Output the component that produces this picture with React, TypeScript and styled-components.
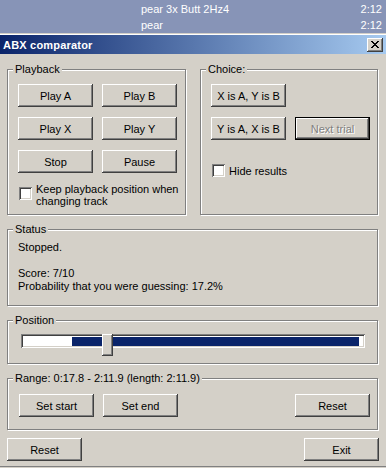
import React from 'react';
import styled, { createGlobalStyle, css } from 'styled-components';

const GlobalStyle = createGlobalStyle`
    html, body {
        margin: 0;
        padding: 0;
        background: #d4d0c8;
    }
    body {
        font-family: "Liberation Sans", Arial, sans-serif;
        font-size: 11px;
        color: #000;
    }
`;

const raised = css`
    box-shadow: inset -1px -1px #404040, inset 1px 1px #fff, inset -2px -2px #808080, inset 2px 2px #d4d0c8;
`;

const sunken = css`
    box-shadow: inset 1px 1px #808080, inset -1px -1px #fff, inset 2px 2px #404040, inset -2px -2px #d4d0c8;
`;

const Screen = styled.div`
    width: 386px;
    height: 468px;
    display: flex;
    flex-direction: column;
    overflow: hidden;
`;

const TrackList = styled.div`
    background: #8794b7;
    color: #fff;
`;

const TrackRow = styled.div<{ $h: number }>`
    height: ${(p) => p.$h}px;
    display: flex;
    align-items: center;
    justify-content: space-between;
    padding: 0 4px 0 141px;
`;

const FrameEdge = styled.div`
    height: 1px;
    border-top: 1px solid #d4d0c8;
    background: #fff;
`;

const TitleBar = styled.div`
    height: 19px;
    display: flex;
    align-items: center;
    justify-content: space-between;
    padding: 0 3px 0 3px;
    background: linear-gradient(to right, #0a246a, #a6caf0);
    color: #fff;
    font-weight: bold;
    letter-spacing: 0.2px;
`;

const CloseButton = styled.div`
    width: 16px;
    height: 14px;
    display: flex;
    align-items: center;
    justify-content: center;
    background: #d4d0c8;
    ${raised};
`;

const Body = styled.div`
    flex: 1;
    display: flex;
    flex-direction: column;
    gap: 14px;
    padding: 15px 8px 0 7px;
    border-bottom: 1px solid #808080;
    margin-bottom: 1px;
`;

const TopRow = styled.div`
    display: grid;
    grid-template-columns: 179px 178px;
    column-gap: 14px;
    height: 146px;
`;

const Group = styled.div<{ $h?: number; $pad: string }>`
    position: relative;
    box-sizing: border-box;
    ${(p) => p.$h && `height: ${p.$h}px;`}
    padding: ${(p) => p.$pad};
    border: 1px solid #808080;
    box-shadow: inset 1px 1px #fff, 1px 1px #fff;
`;

const Caption = styled.span`
    position: absolute;
    top: -7px;
    left: 5px;
    padding: 0 2px;
    line-height: 13px;
    background: #d4d0c8;
`;

const ButtonGrid = styled.div`
    display: grid;
    grid-template-columns: 75px 75px;
    gap: 10px 9px;
`;

const ButtonRow = styled.div<{ $mt?: number }>`
    display: flex;
    gap: 9px;
    margin-top: ${(p) => p.$mt || 0}px;
`;

const Button = styled.div<{ $default?: boolean; $disabled?: boolean }>`
    box-sizing: border-box;
    width: 75px;
    height: 23px;
    display: flex;
    align-items: center;
    justify-content: center;
    background: #d4d0c8;
    ${raised};
    ${(p) =>
        p.$default &&
        css`
            border: 1px solid #000;
        `}
    ${(p) =>
        p.$disabled &&
        css`
            color: #808080;
            text-shadow: 1px 1px #fff;
        `}
`;

const CheckRow = styled.div<{ $mt: number; $top?: boolean }>`
    display: flex;
    align-items: ${(p) => (p.$top ? 'flex-start' : 'center')};
    gap: 4px;
    margin-top: ${(p) => p.$mt}px;
    margin-left: 1px;
    line-height: 12px;
`;

const CheckBox = styled.div<{ $mt?: number }>`
    flex: none;
    width: 13px;
    height: 13px;
    margin-top: ${(p) => p.$mt || 0}px;
    background: #fff;
    ${sunken};
`;

const StatusText = styled.div`
    line-height: 13px;
    white-space: pre;
`;

const Slider = styled.div`
    position: relative;
    width: 344px;
    height: 22px;
    margin-left: 13px;
`;

const Track = styled.div`
    position: relative;
    margin-top: 4px;
    height: 14px;
    background: #fff;
    ${sunken};
`;

const Selection = styled.div`
    position: absolute;
    top: 3px;
    bottom: 2px;
    background: #0a246a;
`;

const Thumb = styled.div`
    position: absolute;
    top: 0;
    width: 11px;
    height: 22px;
    background: #d4d0c8;
    ${raised};
`;

const Footer = styled.div`
    display: flex;
    justify-content: space-between;
    margin: -6px -1px 0 0;
`;

const Spacer = styled.div`
    flex: 1;
`;

const CloseGlyph = () => (
    <svg width="8" height="7" viewBox="0 0 8 7" shapeRendering="crispEdges">
        <path
            d="M0 0h2v1h-2zM6 0h2v1h-2zM1 1h2v1h-2zM5 1h2v1h-2zM2 2h4v1h-4zM3 3h2v1h-2zM2 4h4v1h-4zM1 5h2v1h-2zM5 5h2v1h-2zM0 6h2v1h-2zM6 6h2v1h-2z"
            fill="#000"
        />
    </svg>
);

const tracks = [
    { name: 'pear 3x Butt 2Hz4', time: '2:12', h: 17 },
    { name: 'pear', time: '2:12', h: 16 },
];

// slider geometry in px, inside the 344px track
const selStart = 51;
const selEnd = 338;
const thumbAt = 81;

export default function App() {
    return (
        <Screen>
            <GlobalStyle />
            <TrackList>
                {tracks.map((t) => (
                    <TrackRow key={t.name} $h={t.h}>
                        <span>{t.name}</span>
                        <span>{t.time}</span>
                    </TrackRow>
                ))}
            </TrackList>
            <FrameEdge />
            <TitleBar>
                <span>ABX comparator</span>
                <CloseButton>
                    <CloseGlyph />
                </CloseButton>
            </TitleBar>
            <Body>
                <TopRow>
                    <Group $pad="14px 0 0 10px">
                        <Caption>Playback</Caption>
                        <ButtonGrid>
                            <Button>Play A</Button>
                            <Button>Play B</Button>
                            <Button>Play X</Button>
                            <Button>Play Y</Button>
                            <Button>Stop</Button>
                            <Button>Pause</Button>
                        </ButtonGrid>
                        <CheckRow $mt={10} $top>
                            <CheckBox $mt={4} />
                            <span>
                                Keep playback position when
                                <br />
                                changing track
                            </span>
                        </CheckRow>
                    </Group>
                    <Group $pad="14px 0 0 10px">
                        <Caption>Choice:</Caption>
                        <Button>X is A, Y is B</Button>
                        <ButtonRow $mt={10}>
                            <Button>Y is A, X is B</Button>
                            <Button $default $disabled>
                                Next trial
                            </Button>
                        </ButtonRow>
                        <CheckRow $mt={24}>
                            <CheckBox />
                            <span>Hide results</span>
                        </CheckRow>
                    </Group>
                </TopRow>
                <Group $h={77} $pad="11px 0 0 10px">
                    <Caption>Status</Caption>
                    <StatusText>{'Stopped.\n\nScore: 7/10\nProbability that you were guessing: 17.2%'}</StatusText>
                </Group>
                <Group $h={44} $pad="9px 0 0 0">
                    <Caption>Position</Caption>
                    <Slider>
                        <Track>
                            <Selection style={{ left: selStart, width: selEnd - selStart }} />
                        </Track>
                        <Thumb style={{ left: thumbAt }} />
                    </Slider>
                </Group>
                <Group $h={52} $pad="15px 7px 0 11px">
                    <Caption>Range: 0:17.8 - 2:11.9 (length: 2:11.9)</Caption>
                    <ButtonRow>
                        <Button>Set start</Button>
                        <Button>Set end</Button>
                        <Spacer />
                        <Button>Reset</Button>
                    </ButtonRow>
                </Group>
                <Footer>
                    <Button>Reset</Button>
                    <Button>Exit</Button>
                </Footer>
            </Body>
        </Screen>
    );
}
